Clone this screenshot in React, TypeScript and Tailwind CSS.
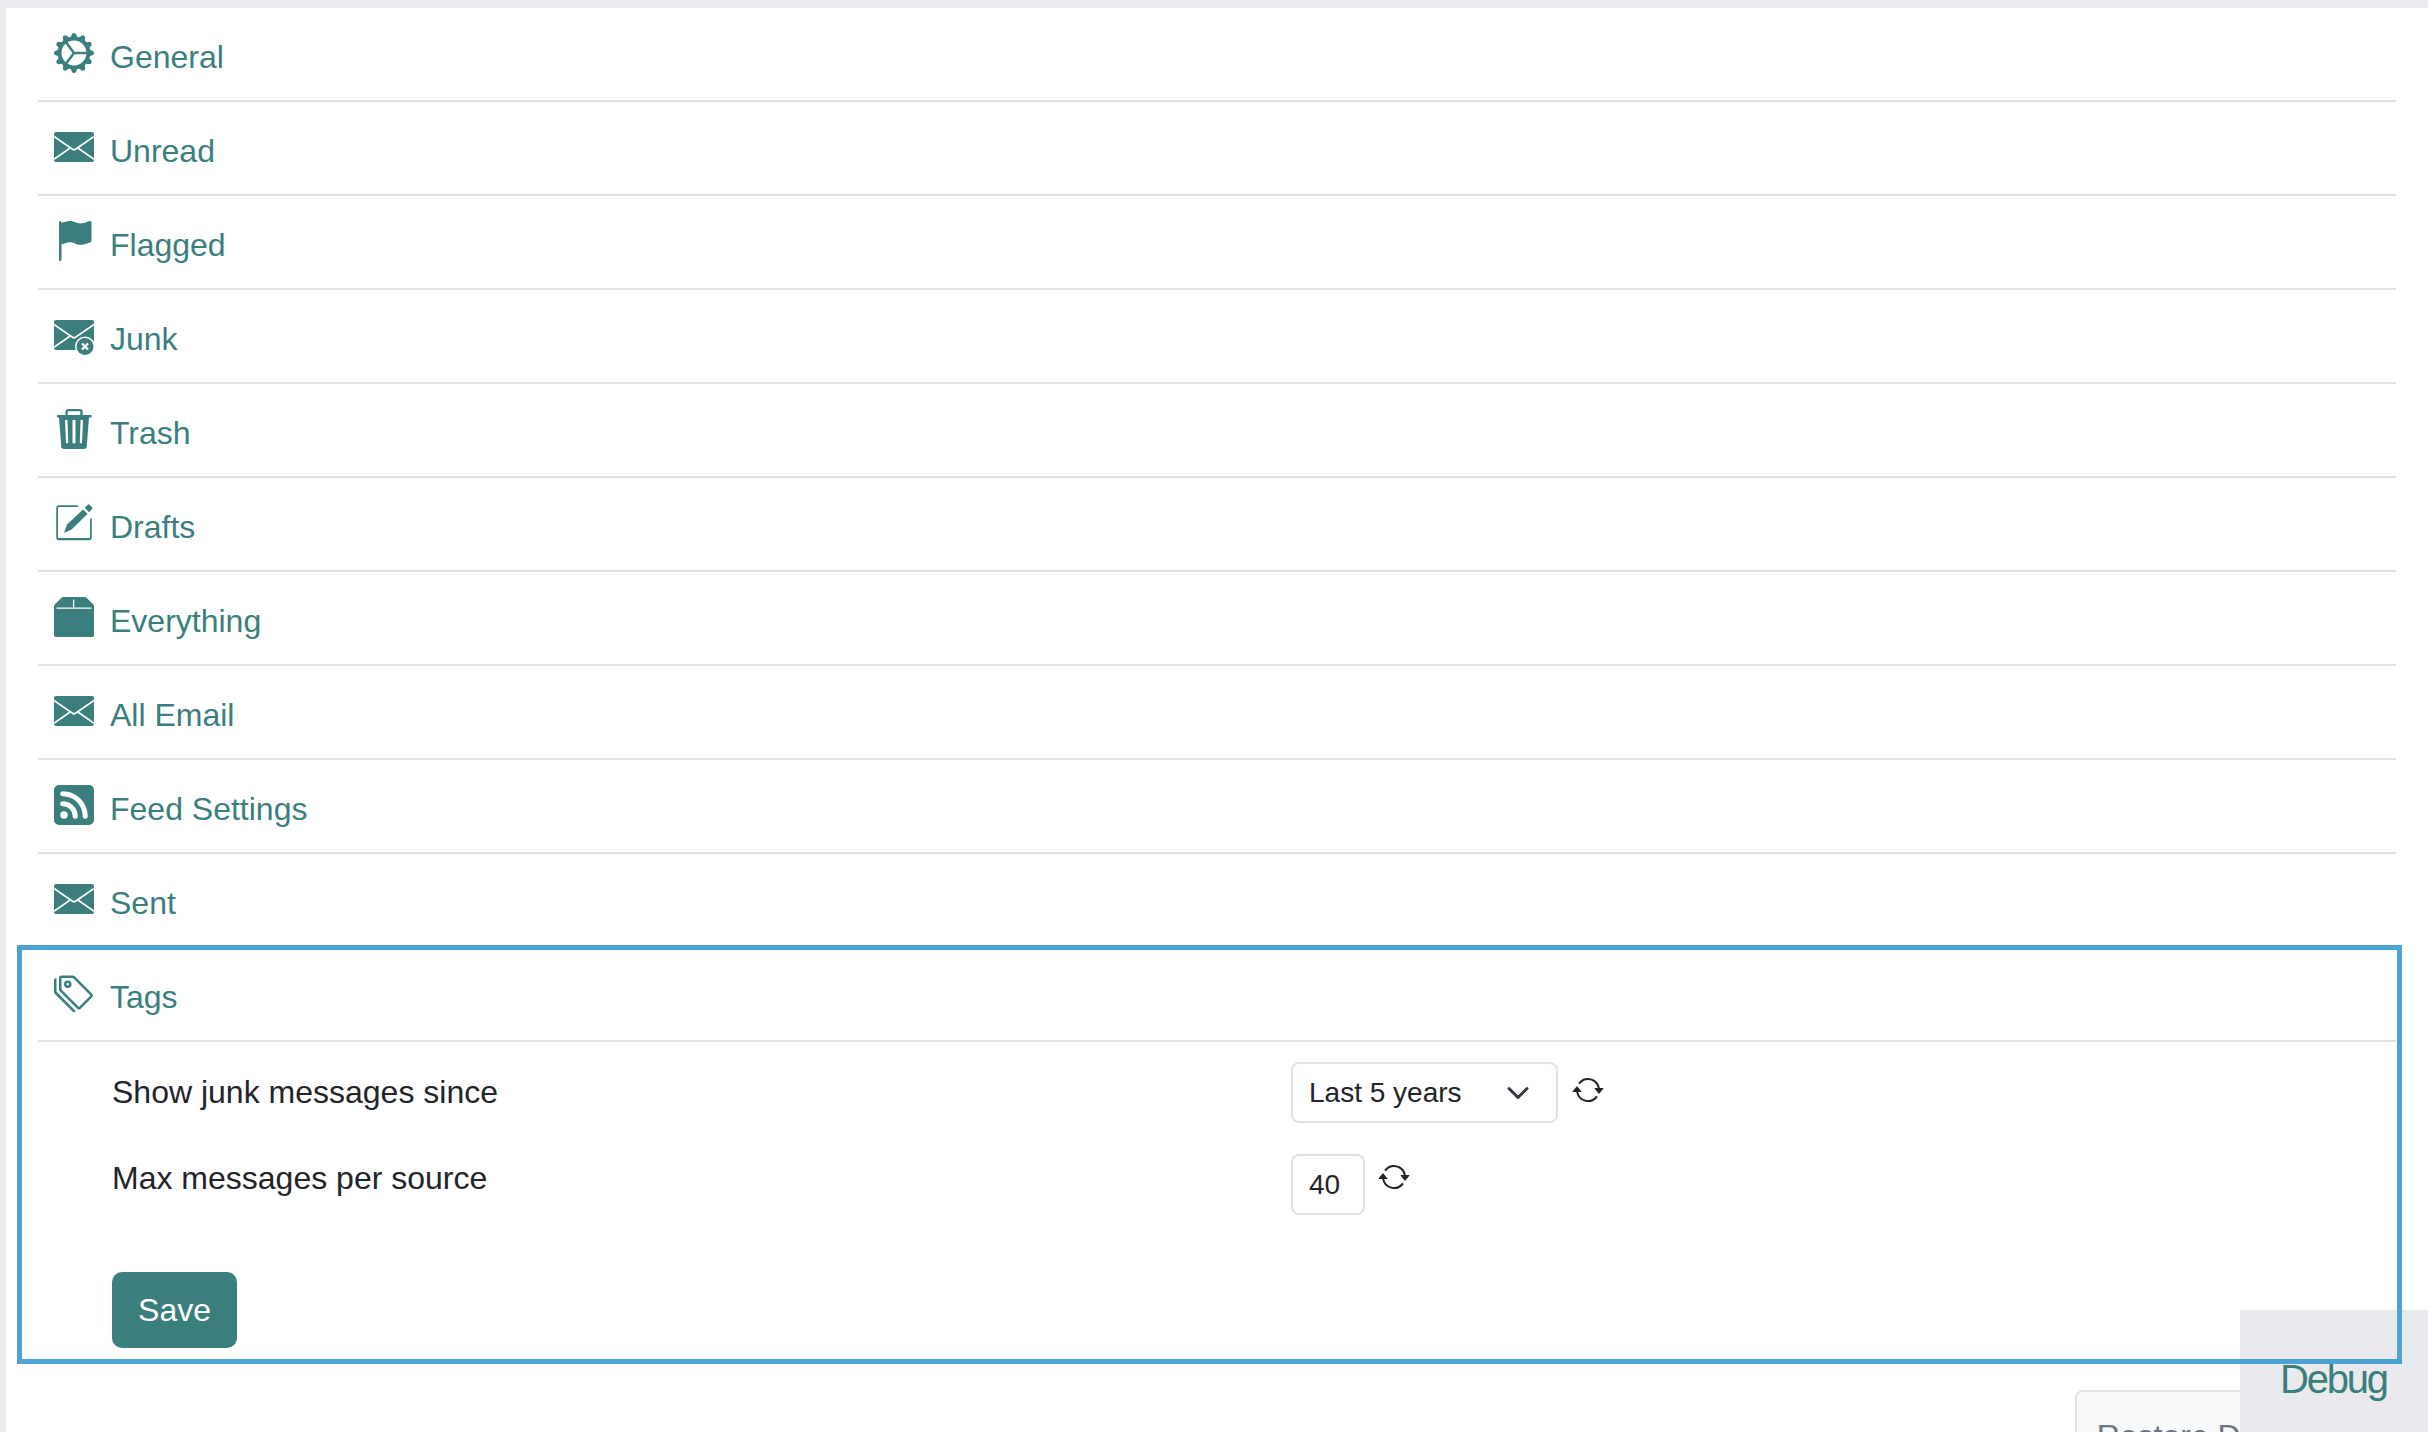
import type { ReactNode } from "react";
import { BsArrowRepeat, BsChevronDown, BsFlagFill, BsGearWideConnected, BsRssFill, BsTags } from "react-icons/bs";

function Envelope() {
  return (
    <svg viewBox="0 0 16 16" className="h-10 w-10 fill-current">
      <rect y="2" width="16" height="12" rx="0.8" />
      <path d="M-.2 3.7 7.4 8.9c.4.3.8.3 1.2 0l7.6-5.2M-.2 13 6.3 8.5M16.2 13 9.7 8.5" stroke="white" strokeWidth="0.65" fill="none" />
    </svg>
  );
}

function JunkEnvelope() {
  return (
    <svg viewBox="0 0 16 16" className="h-10 w-10 fill-current">
      <rect y="2" width="16" height="12" rx="0.8" />
      <path d="M-.2 3.7 7.4 8.9c.4.3.8.3 1.2 0l7.6-5.2M-.2 13 6.3 8.5" stroke="white" strokeWidth="0.65" fill="none" />
      <circle cx="12.4" cy="12.6" r="4" className="fill-white" />
      <circle cx="12.4" cy="12.6" r="3.4" />
      <path d="M11.2 11.4 13.6 13.8M13.6 11.4 11.2 13.8" stroke="white" strokeWidth="0.9" fill="none" />
    </svg>
  );
}

function Trash() {
  return (
    <svg viewBox="0 0 16 16" className="h-10 w-10 fill-current">
      <path
        fillRule="evenodd"
        d="M5.6 0h4.8a1.1 1.1 0 0 1 1.1 1.1v1.3h3.1a.5.5 0 0 1 0 1H14l-.9 11.5a1.1 1.1 0 0 1-1.1 1.1H4a1.1 1.1 0 0 1-1.1-1.1L2 3.4h-.4a.5.5 0 0 1 0-1h3V1.1A1.1 1.1 0 0 1 5.6 0zM5.5 1.1v1.3h5V1.1a.2.2 0 0 0-.2-.2H5.7a.2.2 0 0 0-.2.2zM4.4 4.4l.4 9.3h.9l-.3-9.3zM7.4 4.4v9.3h1.2V4.4zM10.6 4.4l-.3 9.3h.9l.4-9.3z"
      />
    </svg>
  );
}

function Draft() {
  return (
    <svg viewBox="0 0 16 16" className="h-10 w-10 fill-current">
      <path d="M2 .9h7.6v.7H2a.4.4 0 0 0-.4.4v11.6c0 .2.2.4.4.4h12a.4.4 0 0 0 .4-.4V6.2h.7v7.6a1.1 1.1 0 0 1-1.1 1.1H2a1.1 1.1 0 0 1-1.1-1.1V2A1.1 1.1 0 0 1 2 .9z" />
      <path d="M4 12 5.2 8.6 11.6 2.6 13.4 4.4 7 10.6z" />
      <path d="M12.3 1.9 13.6.6a.4.4 0 0 1 .5 0l1.2 1.2a.4.4 0 0 1 0 .5L14 3.7z" />
    </svg>
  );
}

function Box() {
  return (
    <svg viewBox="0 0 16 16" className="h-10 w-10 fill-current">
      <path d="M3.6 0h8.8a.8.8 0 0 1 .6.3L15.7 3a1 1 0 0 1 .3.7v11.5a.8.8 0 0 1-.8.8H.8a.8.8 0 0 1-.8-.8V3.7a1 1 0 0 1 .3-.7L3 .3a.8.8 0 0 1 .6-.3z" />
      <path d="M1 4.4H15M7.85 1V4.4" stroke="white" strokeWidth="0.5" fill="none" />
    </svg>
  );
}

const sections: { name: string; icon: ReactNode }[] = [
  { name: "General", icon: <BsGearWideConnected className="h-10 w-10" /> },
  { name: "Unread", icon: <Envelope /> },
  { name: "Flagged", icon: <BsFlagFill className="h-10 w-10" /> },
  { name: "Junk", icon: <JunkEnvelope /> },
  { name: "Trash", icon: <Trash /> },
  { name: "Drafts", icon: <Draft /> },
  { name: "Everything", icon: <Box /> },
  { name: "All Email", icon: <Envelope /> },
  { name: "Feed Settings", icon: <BsRssFill className="h-10 w-10" /> },
  { name: "Sent", icon: <Envelope /> },
];

function SectionRow({ name, icon }: { name: string; icon: ReactNode }) {
  return (
    <div className="flex h-[94px] items-start gap-4 border-b-2 border-[#dee2e6] pl-4 pt-[25px] text-[#3a7f7d]">
      <span className="shrink-0">{icon}</span>
      <span className="leading-[48px]">{name}</span>
    </div>
  );
}

export default function App() {
  return (
    <div className="relative h-[1432px] w-full overflow-hidden bg-[#eaebef] pl-[6px] pt-2 font-['Liberation_Sans',Arial,sans-serif] text-[32px]">
      <div className="h-full bg-white pl-8 pr-8">
        {sections.map((s) => (
          <SectionRow key={s.name} name={s.name} icon={s.icon} />
        ))}

        <div className="relative z-10 -ml-[18px] -mr-[3px] h-[413px] pl-[18px] pr-[3px] outline-5 -outline-offset-2 outline-[#4ba3d6]">
          <SectionRow name="Tags" icon={<BsTags className="h-10 w-10" />} />

          <div className="mt-5 flex pl-[74px]">
            <label className="w-[1179px] pt-[6px] leading-[48px] text-[#212529]">Show junk messages since</label>
            <div className="relative">
              <select
                defaultValue="5y"
                className="h-[61px] w-[267px] appearance-none rounded-lg border-2 border-[#dee2e6] bg-white pl-4 text-[28px] text-[#212529]"
              >
                <option value="5y">Last 5 years</option>
              </select>
              <BsChevronDown className="pointer-events-none absolute right-[28px] top-[19px] h-6 w-6 stroke-1 text-[#343a40]" />
            </div>
            <BsArrowRepeat className="ml-[14px] mt-3 h-8 w-8 text-[#212529]" />
          </div>

          <div className="mt-[31px] flex pl-[74px]">
            <label className="w-[1179px] leading-[48px] text-[#212529]">Max messages per source</label>
            <input
              readOnly
              value="40"
              className="h-[61px] w-[74px] rounded-lg border-2 border-[#dee2e6] bg-white pl-4 text-[28px] text-[#212529]"
            />
            <BsArrowRepeat className="ml-[13px] mt-[7px] h-8 w-8 text-[#212529]" />
          </div>

          <div className="mt-[57px] pl-[74px]">
            <button className="h-[76px] w-[125px] rounded-[10px] bg-[#3a7f7d] text-white">Save</button>
          </div>
        </div>

        <div className="mt-[29px] flex justify-end pr-[39px]">
          <button className="h-[92px] shrink-0 rounded-lg border-2 border-[#dee2e6] bg-[#f8f9fa] px-5 text-[#6c757d]">
            Restore Defaults
          </button>
        </div>
      </div>

      <div className="absolute bottom-0 right-0 z-[5] h-[122px] w-[188px] bg-[#e9eaee] pl-10 pt-[44px] text-[40px] leading-[50px] tracking-[-2.2px] text-[#3a7f7d]">
        Debug
      </div>
    </div>
  );
}
